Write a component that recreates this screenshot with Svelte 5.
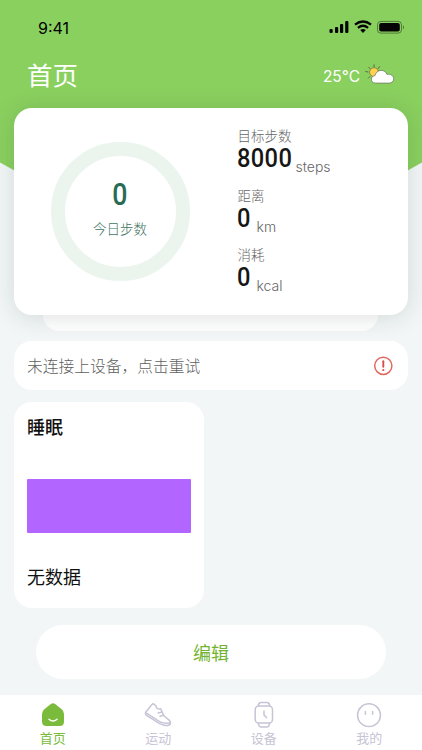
<script>
  const metrics = [
    { label: '目标步数', value: '8000', unit: 'steps' },
    { label: '距离', value: '0', unit: 'km' },
    { label: '消耗', value: '0', unit: 'kcal' }
  ];
</script>

<div class="screen">
  <svg class="backdrop" width="422" height="320" viewBox="0 0 422 320" aria-hidden="true">
    <path d="M0 0H422V162.500L220 275Q211 280 202 275L0 162.500Z" fill="#8ad05f" />
  </svg>

  <header>
    <div class="status">
      <span class="time">9:41</span>
      <svg width="76" height="16" viewBox="0 0 76 16" aria-hidden="true">
        <g fill="#050505">
          <rect x=".5" y="9" width="3.200" height="4" rx="1" />
          <rect x="6" y="7" width="3.200" height="6" rx="1" />
          <rect x="11" y="4" width="3.200" height="9" rx="1" />
          <rect x="16.200" y="1" width="3.200" height="12" rx="1" />
          <path d="M31.200 9.900Q34 8 36.800 9.900L34 13Z" />
        </g>
        <g fill="none" stroke="#050505" stroke-width="2.300">
          <path d="M26 4.600Q34-1.500 42 4.600" />
          <path d="M28.900 7.800Q34 3.800 39.100 7.800" />
        </g>
        <rect x="48.500" y="1.400" width="24" height="11.700" rx="3.300" fill="none" stroke="#050505" stroke-opacity=".42" />
        <rect x="50.200" y="3" width="20.600" height="8.500" rx="1.900" fill="#050505" />
        <path d="M74 5.200Q76 7.200 74 9.200Z" fill="#050505" fill-opacity=".5" />
      </svg>
    </div>
    <div class="heading">
      <h1>首页</h1>
      <div class="weather">
        <span>25<i>°</i>C</span>
        <svg width="30" height="22" viewBox="0 0 30 22" aria-hidden="true">
          <g stroke="#536044" stroke-width=".9" stroke-linecap="round">
            <path d="M9 .8V3M3.700 3.200L5 4.600M14.500 2.700L13.200 4.500M.8 7.500L3 8M3.500 14L4.800 12.600" />
          </g>
          <circle cx="9" cy="8.200" r="4.400" fill="#ffd34f" stroke="#786b38" stroke-width=".7" />
          <path d="M10.500 19.100C7.600 19.100 6.200 17 6.400 15.100C6.600 13 8.100 11.700 9.900 11.700C10.700 8.300 13.300 6.400 16.200 6.400C19.100 6.400 20.900 7.900 21.900 10.300C25.800 9.800 28.700 11.800 28.700 14.800C28.700 17.300 26.700 19.100 24.100 19.100Z" fill="#fff" stroke="#667059" stroke-width=".7" />
        </svg>
      </div>
    </div>
  </header>

  <main>
    <section class="summary">
      <div class="ring">
        <strong>0</strong>
        <span>今日步数</span>
      </div>
      <div class="metrics">
        {#each metrics as metric}
          <div class="metric">
            <div class="label">{metric.label}</div>
            <div class="amount"><b class:wide={metric.value.length > 1}>{metric.value}</b><span>{metric.unit}</span></div>
          </div>
        {/each}
      </div>
    </section>
    <div class="under"></div>

    <section class="notice">
      <span>未连接上设备，点击重试</span>
      <svg width="20" height="20" viewBox="0 0 20 20" aria-hidden="true">
        <circle cx="10.300" cy="9.800" r="8.600" fill="none" stroke="#e2695f" stroke-width="1.500" />
        <path d="M10.300 5.200V10.800" stroke="#dc4d43" stroke-width="1.900" stroke-linecap="round" />
        <circle cx="10.300" cy="14" r="1.100" fill="#dc4d43" />
      </svg>
    </section>

    <section class="sleep">
      <h2>睡眠</h2>
      <div class="chart"></div>
      <p>无数据</p>
    </section>

    <button>编辑</button>
  </main>

  <nav>
    <div class="tab active">
      <svg width="28" height="28" viewBox="0 0 28 28" aria-hidden="true">
        <path d="M11.900 3.100Q14 1.600 16.100 3.100L22.700 8.200Q25 10 25 13V20.500Q25 25 20.500 25H7.500Q3 25 3 20.500V13Q3 10 5.300 8.200Z" fill="#7bbb3c" />
        <path d="M10 18.200Q14 21.700 18 18.200" fill="none" stroke="#fff" stroke-width="1.500" stroke-linecap="round" />
      </svg>
      <span>首页</span>
    </div>
    <div class="tab">
      <svg width="28" height="28" viewBox="0 0 28 28" aria-hidden="true">
        <g fill="none" stroke="#c7c4d6" stroke-width="1.500" stroke-linecap="round" stroke-linejoin="round">
          <path d="M1.700 11.300L8 3.400Q9 2.300 10.200 3.400L12.300 5.300C12 7.600 14.500 8.600 16.700 7.700L19.800 14.700C21.700 17.500 26.500 18.200 26.500 21.700C26.500 24.600 23.500 25 20.300 24.200C16.500 23.300 13.700 22 11 19.700L3.200 14.900Q.8 13.300 1.700 11.300Z" />
          <path d="M2.500 12.200L11.400 17.800C14.500 20.800 20.500 22.800 26 22M14.200 11.900L18 11M16 15.300L19.500 14.300" />
        </g>
      </svg>
      <span>运动</span>
    </div>
    <div class="tab">
      <svg width="28" height="28" viewBox="0 0 28 28" aria-hidden="true">
        <g fill="none" stroke="#c7c4d6" stroke-width="1.500" stroke-linecap="round" stroke-linejoin="round">
          <rect x="5.200" y="5.100" width="17.300" height="16.900" rx="3.600" />
          <path d="M8.200 5.100Q8.500 1.500 11 1.500H17Q19.500 1.500 19.700 5.100M8.200 22.200L9 24.500Q9.400 26 11 26H17Q18.500 26 18.900 24.500L19.700 22.200M14 10V14L16.500 16.600" />
        </g>
      </svg>
      <span>设备</span>
    </div>
    <div class="tab">
      <svg width="28" height="28" viewBox="0 0 28 28" aria-hidden="true">
        <circle cx="14" cy="14.200" r="11.400" fill="none" stroke="#c7c4d6" stroke-width="1.500" />
        <path d="M10.400 10.500V13.200M17.600 10.500V13.200" stroke="#c7c4d6" stroke-width="1.500" stroke-linecap="round" />
      </svg>
      <span>我的</span>
    </div>
  </nav>
</div>

<style>
  .screen {
    position: relative;
    box-sizing: border-box;
    width: 422px;
    height: 750px;
    overflow: hidden;
    display: flex;
    flex-direction: column;
    background: #f2f6f7;
    font-family: Inter, "Noto Sans CJK SC", sans-serif;
    color: #171717;
  }
  svg { display: block; flex: none; }
  h1, h2, p { margin: 0; }
  .backdrop { position: absolute; top: 0; left: 0; z-index: 0; }
  header { position: relative; height: 108px; flex: none; }
  .status {
    display: flex;
    justify-content: space-between;
    align-items: center;
    height: 20px;
    padding: 18px 17px 0 38px;
  }
  .time { font-size: 16px; font-weight: 400; letter-spacing: 0; color: #000; }
  .heading {
    display: flex;
    justify-content: space-between;
    align-items: center;
    height: 40px;
    padding: 17px 27px 0 27px;
    color: #fff;
  }
  h1 { padding-bottom: 2px; font: 400 25.500px/36px "Noto Sans CJK SC", sans-serif; }
  .weather { display: flex; align-items: center; gap: 5px; font-size: 15.500px; line-height: 20px; }
  .weather span { padding-top: 4px; }
  i { font-style: normal; }
  main { position: relative; height: 587px; flex: none; display: flex; flex-direction: column; }
  .summary {
    position: relative;
    z-index: 2;
    box-sizing: border-box;
    display: flex;
    height: 207px;
    flex: none;
    margin: 0 14px;
    padding: 18px 0 0 36.500px;
    border-radius: 18px;
    background: #fff;
    box-shadow: 0 2px 24px rgba(20, 35, 30, .14);
  }
  .ring {
    box-sizing: border-box;
    display: flex;
    flex-direction: column;
    align-items: center;
    width: 139px;
    height: 139px;
    margin-top: 16px;
    padding-top: 22px;
    border: 14px solid #ebf5ee;
    border-radius: 50%;
  }
  .ring strong { font: 500 31px/34px Roboto, sans-serif; transform: scaleX(.86); color: #286b52; }
  .ring span { margin-top: 5px; font: 300 13.500px/22px "Noto Sans CJK SC", sans-serif; color: #41745f; }
  .metrics { margin-left: 48px; }
  .metric { height: 59.500px; }
  .label { height: 18px; font: 300 13.500px/18px "Noto Sans CJK SC", sans-serif; color: #666; }
  .amount { display: flex; height: 32px; padding-top: 1px; }
  .amount b {
    width: 20px;
    margin-left: -1px;
    font: 500 26px/26px Roboto, sans-serif;
    transform: scaleX(.91);
    transform-origin: left;
    letter-spacing: .4px;
    color: #161616;
  }
  .amount b.wide { width: 59px; }
  .amount span { padding-top: 12px; font-size: 14px; line-height: 20px; font-weight: 300; color: #666; }
  .under { height: 16px; flex: none; margin: 0 44px 0 43px; background: #fff; border-radius: 0 0 17px 17px; }
  .notice {
    box-sizing: border-box;
    display: flex;
    align-items: center;
    justify-content: space-between;
    height: 49px;
    flex: none;
    margin: 10px 14px 0;
    padding: 0 15px 0 13px;
    border-radius: 18px;
    background: #fff;
    font: 300 15.750px/24px "Noto Sans CJK SC", sans-serif;
    color: #606060;
  }
  .sleep {
    box-sizing: border-box;
    width: 190px;
    height: 206px;
    flex: none;
    margin: 12px 0 0 14px;
    padding: 11px 13px;
    border-radius: 18px;
    background: #fff;
  }
  h2, p { font: 500 18px/27px "Noto Sans CJK SC", sans-serif; color: #111; }
  p { font-weight: 400; }
  .chart { height: 54px; margin: 39px 0 30px; background: #b366ff; border-radius: 1px; }
  button {
    width: 350px;
    height: 54px;
    flex: none;
    margin: 17px 36px 0;
    padding: 0;
    border: 0;
    border-radius: 27px;
    background: #fff;
    font: 400 18px/27px "Noto Sans CJK SC", sans-serif;
    color: #72b432;
  }
  nav {
    position: relative;
    box-sizing: border-box;
    display: flex;
    height: 55px;
    padding-top: 6px;
    background: #fff;
  }
  .tab {
    flex: 1;
    display: flex;
    flex-direction: column;
    align-items: center;
    font: 400 13px/18px "Noto Sans CJK SC", sans-serif;
    color: #c7c4d6;
  }
  .active { color: #7bbb3c; }
</style>
